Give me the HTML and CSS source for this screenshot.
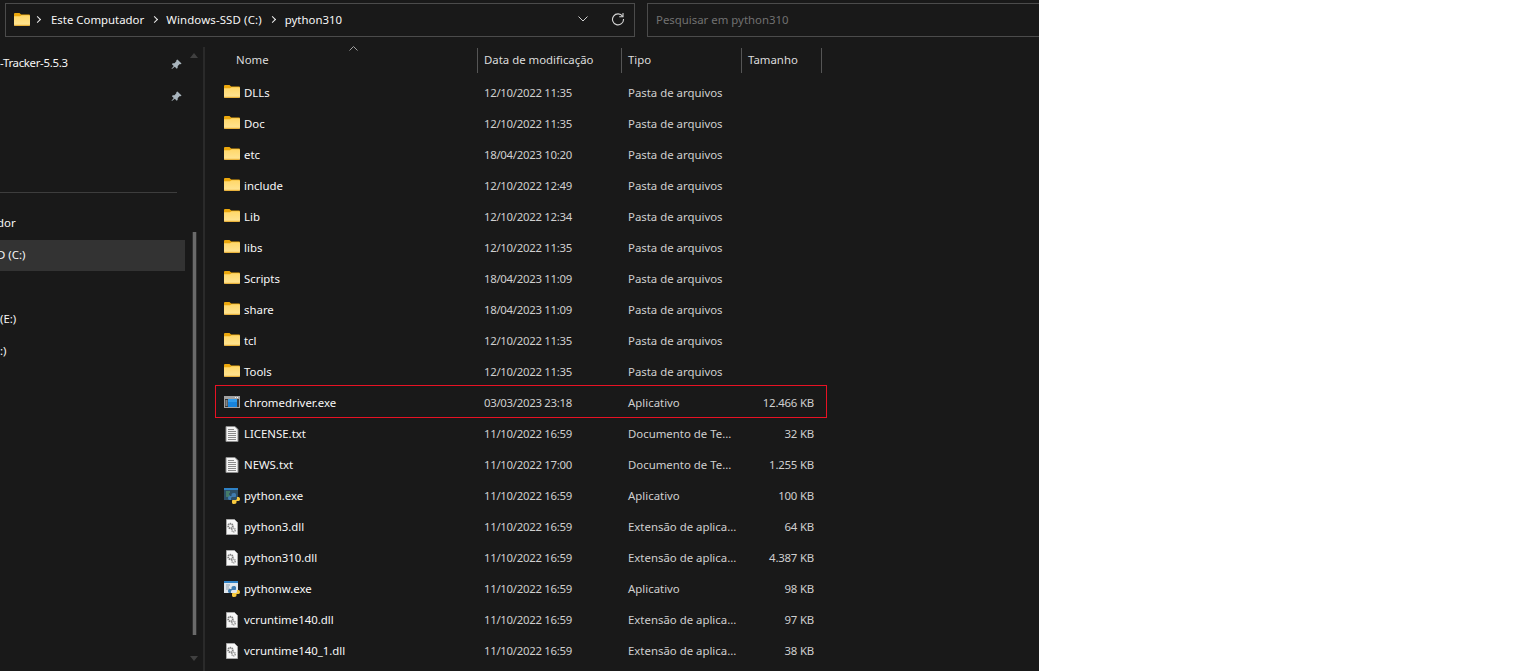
FILE: index.html
```html
<!DOCTYPE html>
<html lang="pt-BR">
<head>
    <meta charset="UTF-8">
    <title>python310</title>
    <link rel="stylesheet" href="styles.css">
</head>
<body>
    <svg class="defs" width="0" height="0">
        <defs>
            <linearGradient id="folderBody" x1="0" y1="0" x2="0" y2="1">
                <stop offset="0" stop-color="#ffd768"/>
                <stop offset="1" stop-color="#ffe596"/>
            </linearGradient>
        </defs>
        <symbol id="folder" viewBox="0 0 16 13">
            <path d="M0 1.200C0 .5.5 0 1.200 0h4.300l1.600 1.600h7.700c.7 0 1.200.5 1.200 1.200V4H0z" fill="#eba70c"/>
            <path d="M0 3.200h6l1.600-1h7.200c.7 0 1.200.5 1.200 1.200v8.400c0 .7-.5 1.200-1.200 1.200H1.200C.5 13 0 12.500 0 11.800z" fill="url(#folderBody)"/>
            <path d="M0 11.800h16c0 .7-.5 1.200-1.200 1.200H1.200C.5 13 0 12.500 0 11.800z" fill="#e9b23c"/>
        </symbol>
        <symbol id="app" viewBox="0 0 16 12">
            <rect width="16" height="12" fill="#a3a3a3"/>
            <rect x="11" y="1" width="1" height="1" fill="#f4f4f4"/>
            <rect x="13" y="1" width="1" height="1" fill="#f4f4f4"/>
            <rect x="1" y="3" width="14" height="8" fill="#3a3a3a"/>
            <path d="M1.500 5h2M1.500 7h2M1.500 9h2" stroke="#cfcfcf"/>
            <rect x="4" y="3" width="9" height="8" fill="#1783dc"/>
            <rect x="4" y="3" width="9" height="3" fill="#2f9bec"/>
        </symbol>
        <symbol id="text" viewBox="0 0 13 16">
            <path d="M.5.5h9l3 3v12H.5z" fill="#f4f4f4" stroke="#8f8f8f"/>
            <path d="M2.500 3.500h6M2.500 5.500h8M2.500 7.500h8M2.500 9.500h8M2.500 11.500h8M2.500 13.500h8" stroke="#8a8a8a"/>
        </symbol>
        <symbol id="dll" viewBox="0 0 12 16">
            <path d="M.5.5h8l3 3v12H.5z" fill="#f7f7f7" stroke="#a8a8a8"/>
            <circle cx="4.500" cy="7" r="2.300" fill="none" stroke="#808080" stroke-width="1.800" stroke-dasharray="1.300 .5"/>
            <circle cx="7.500" cy="11" r="1.700" fill="none" stroke="#969696" stroke-width="1.600" stroke-dasharray="1.100 .5"/>
        </symbol>
        <symbol id="python" viewBox="0 0 16 16">
            <rect width="14" height="12" fill="#2d4f66"/>
            <rect y="0" width="14" height="2" fill="#2f82c6"/>
            <path d="M2 4h4M2 6h3M2 8h4" stroke="#5ea86a"/>
            <path d="M10 5c-2 0-2.500.8-2.500 2v1H5.500C4.500 8 4 9 4 10s.5 2 1.500 2H7v-1.500c0-.8.700-1.500 1.500-1.500h2.500c.8 0 1-.5 1-1V6.500C12 5.500 11 5 10 5z" fill="#3f7cb0"/>
            <path d="M10 16c2 0 2.500-.8 2.500-2v-1h2c1 0 1.500-1 1.500-2s-.5-2-1.500-2H13v1.500c0 .8-.7 1.500-1.500 1.500H9c-.8 0-1 .5-1 1v1.500c0 1 1 1.500 2 1.500z" fill="#f7c93e"/>
        </symbol>
        <symbol id="pythonw" viewBox="0 0 16 16">
            <rect width="14" height="12" fill="#dfe6ec"/>
            <rect y="0" width="14" height="2" fill="#2f82c6"/>
            <path d="M2 4h4M2 6h3M2 8h4" stroke="#8fa3b3"/>
            <path d="M10 5c-2 0-2.500.8-2.500 2v1H5.500C4.500 8 4 9 4 10s.5 2 1.500 2H7v-1.500c0-.8.700-1.500 1.500-1.500h2.500c.8 0 1-.5 1-1V6.500C12 5.500 11 5 10 5z" fill="#3f7cb0"/>
            <path d="M10 16c2 0 2.500-.8 2.500-2v-1h2c1 0 1.500-1 1.500-2s-.5-2-1.500-2H13v1.500c0 .8-.7 1.500-1.500 1.500H9c-.8 0-1 .5-1 1v1.500c0 1 1 1.500 2 1.500z" fill="#f7c93e"/>
        </symbol>
        <symbol id="pin" viewBox="0 0 12 12">
            <path d="M7 .5l4.500 4.500-1 .8-.9-.3L7.400 7.700l-.2 2-1 .8-2-2L1 11l-.5-.5L3 7.700l-2-2 .8-1 2-.2 2.200-2.200-.3-.9z" fill="#a9b5bd"/>
        </symbol>
    </svg>

    <div class="explorer">
        <div class="toolbar">
            <div class="address">
                <svg class="crumb-folder"><use href="#folder"/></svg>
                <span class="crumb-sep crumb-sep-first"></span>
                <span class="crumb">Este Computador</span>
                <span class="crumb-sep"></span>
                <span class="crumb crumb-wide">Windows-SSD (C:)</span>
                <span class="crumb-sep crumb-sep-last"></span>
                <span class="crumb">python310</span>
                <svg class="addr-down" viewBox="0 0 10 6"><path d="M.5.5L5 5 9.500.5" fill="none" stroke="#cfcfcf"/></svg>
                <svg class="addr-refresh" viewBox="0 0 14 14"><path d="M11.600 4.300A5.500 5.500 0 1 0 12.500 7" fill="none" stroke="#d6d6d6" stroke-width="1.100"/><path d="M12 1v3.800H8.200" fill="none" stroke="#d6d6d6" stroke-width="1.100"/></svg>
            </div>
            <div class="search">Pesquisar em python310</div>
        </div>

        <div class="main">
            <aside class="sidebar">
                <nav class="nav">
                    <div class="nav-item"><span class="nav-tight">-Tracker-5.5.3</span><svg class="pin"><use href="#pin"/></svg></div>
                    <div class="nav-item"><svg class="pin"><use href="#pin"/></svg></div>
                    <div class="nav-item"></div>
                    <div class="nav-item"></div>
                    <div class="nav-sep"><hr></div>
                    <div class="nav-item"><span class="nav-cut">dor</span></div>
                    <div class="nav-item nav-active"><span class="nav-cut">D (C:)</span></div>
                    <div class="nav-item"></div>
                    <div class="nav-item">(E:)</div>
                    <div class="nav-item">:)</div>
                </nav>
                <div class="scrollbar">
                    <span class="arrow-up"></span>
                    <span class="thumb"></span>
                    <span class="arrow-down"></span>
                </div>
            </aside>

            <section class="files">
                <div class="head">
                    <div class="head-cell head-name">Nome<svg class="sort" viewBox="0 0 9 5"><path d="M.5 4.500L4.500.5l4 4" fill="none" stroke="#a0a0a0"/></svg></div>
                    <div class="head-cell">Data de modificação</div>
                    <div class="head-cell">Tipo</div>
                    <div class="head-cell">Tamanho</div>
                </div>

                <div class="row"><div class="name"><svg class="ico"><use href="#folder"/></svg>DLLs</div><div class="cell">12/10/2022 11:35</div><div class="cell">Pasta de arquivos</div><div class="size"></div></div>
                <div class="row"><div class="name"><svg class="ico"><use href="#folder"/></svg>Doc</div><div class="cell">12/10/2022 11:35</div><div class="cell">Pasta de arquivos</div><div class="size"></div></div>
                <div class="row"><div class="name"><svg class="ico"><use href="#folder"/></svg>etc</div><div class="cell">18/04/2023 10:20</div><div class="cell">Pasta de arquivos</div><div class="size"></div></div>
                <div class="row"><div class="name"><svg class="ico"><use href="#folder"/></svg>include</div><div class="cell">12/10/2022 12:49</div><div class="cell">Pasta de arquivos</div><div class="size"></div></div>
                <div class="row"><div class="name"><svg class="ico"><use href="#folder"/></svg>Lib</div><div class="cell">12/10/2022 12:34</div><div class="cell">Pasta de arquivos</div><div class="size"></div></div>
                <div class="row"><div class="name"><svg class="ico"><use href="#folder"/></svg>libs</div><div class="cell">12/10/2022 11:35</div><div class="cell">Pasta de arquivos</div><div class="size"></div></div>
                <div class="row"><div class="name"><svg class="ico"><use href="#folder"/></svg>Scripts</div><div class="cell">18/04/2023 11:09</div><div class="cell">Pasta de arquivos</div><div class="size"></div></div>
                <div class="row"><div class="name"><svg class="ico"><use href="#folder"/></svg>share</div><div class="cell">18/04/2023 11:09</div><div class="cell">Pasta de arquivos</div><div class="size"></div></div>
                <div class="row"><div class="name"><svg class="ico"><use href="#folder"/></svg>tcl</div><div class="cell">12/10/2022 11:35</div><div class="cell">Pasta de arquivos</div><div class="size"></div></div>
                <div class="row"><div class="name"><svg class="ico"><use href="#folder"/></svg>Tools</div><div class="cell">12/10/2022 11:35</div><div class="cell">Pasta de arquivos</div><div class="size"></div></div>
                <div class="row row-marked"><div class="name"><svg class="ico ico-app"><use href="#app"/></svg>chromedriver.exe</div><div class="cell">03/03/2023 23:18</div><div class="cell">Aplicativo</div><div class="size">12.466 KB</div></div>
                <div class="row"><div class="name"><svg class="ico ico-doc"><use href="#text"/></svg>LICENSE.txt</div><div class="cell">11/10/2022 16:59</div><div class="cell">Documento de Te...</div><div class="size">32 KB</div></div>
                <div class="row"><div class="name"><svg class="ico ico-doc"><use href="#text"/></svg>NEWS.txt</div><div class="cell">11/10/2022 17:00</div><div class="cell">Documento de Te...</div><div class="size">1.255 KB</div></div>
                <div class="row"><div class="name"><svg class="ico ico-doc"><use href="#python"/></svg>python.exe</div><div class="cell">11/10/2022 16:59</div><div class="cell">Aplicativo</div><div class="size">100 KB</div></div>
                <div class="row"><div class="name"><svg class="ico ico-doc"><use href="#dll"/></svg>python3.dll</div><div class="cell">11/10/2022 16:59</div><div class="cell">Extensão de aplica...</div><div class="size">64 KB</div></div>
                <div class="row"><div class="name"><svg class="ico ico-doc"><use href="#dll"/></svg>python310.dll</div><div class="cell">11/10/2022 16:59</div><div class="cell">Extensão de aplica...</div><div class="size">4.387 KB</div></div>
                <div class="row"><div class="name"><svg class="ico ico-doc"><use href="#pythonw"/></svg>pythonw.exe</div><div class="cell">11/10/2022 16:59</div><div class="cell">Aplicativo</div><div class="size">98 KB</div></div>
                <div class="row"><div class="name"><svg class="ico ico-doc"><use href="#dll"/></svg>vcruntime140.dll</div><div class="cell">11/10/2022 16:59</div><div class="cell">Extensão de aplica...</div><div class="size">97 KB</div></div>
                <div class="row"><div class="name"><svg class="ico ico-doc"><use href="#dll"/></svg>vcruntime140_1.dll</div><div class="cell">11/10/2022 16:59</div><div class="cell">Extensão de aplica...</div><div class="size">38 KB</div></div>
            </section>
        </div>
    </div>
</body>
</html>
```

FILE: styles.css
```css
html, body {
    margin: 0;
    background: #fff;
}
.defs {
    position: absolute;
}
.explorer {
    width: 1039px;
    height: 671px;
    overflow: hidden;
    background: #191919;
    color: #f7f7f7;
    font: 11.4px "Noto Sans", "Liberation Sans", sans-serif;
}

/* barra de endereco e pesquisa */
.toolbar {
    display: flex;
    height: 47px;
    padding: 3px 0 0 5px;
    box-sizing: border-box;
}
.address, .search {
    height: 34px;
    box-sizing: border-box;
    border: 1px solid #4b4b4b;
    padding-bottom: 2px;
    display: flex;
    align-items: center;
}
.address {
    width: 630px;
    padding-left: 8px;
}
.crumb-folder {
    width: 16px;
    height: 13px;
    flex: none;
}
.crumb-wide {
    letter-spacing: .15px;
}
.crumb-sep {
    width: 4px;
    height: 4px;
    margin: 0 9px 0 8px;
    border-top: 1.5px solid #f0f0f0;
    border-right: 1.5px solid #f0f0f0;
    transform: rotate(45deg);
}
.crumb-sep-first {
    margin: 0 11px 0 5px;
}
.crumb-sep-last {
    margin: 0 10px 0 8px;
}
.addr-down {
    width: 10px;
    height: 6px;
    margin-left: auto;
}
.addr-refresh {
    width: 14px;
    height: 14px;
    margin: 0 9px 0 23px;
}
.search {
    flex: 1;
    margin-left: 12px;
    padding-left: 8px;
    border-right: 0;
    color: #717171;
}

.main {
    display: flex;
    height: 624px;
}

/* painel esquerdo */
.sidebar {
    display: flex;
    width: 205px;
    flex: none;
    box-sizing: border-box;
    border-right: 2px solid #2a2a2a;
}
.nav {
    width: 185px;
}
.nav-item {
    display: flex;
    align-items: center;
    height: 32px;
    padding-bottom: 2px;
    box-sizing: border-box;
    overflow: hidden;
}
.nav-cut {
    margin-left: -3px;
}
.nav-tight {
    letter-spacing: -.3px;
}
.nav-active {
    border-top: 1px solid #191919;
    background: #333;
}
.nav-sep {
    display: flex;
    align-items: center;
    height: 32px;
    padding-top: 2px;
    box-sizing: border-box;
}
.nav-sep hr {
    width: 177px;
    margin: 0;
    border: 0;
    border-top: 1px solid #3d3d3d;
}
.pin {
    width: 11px;
    height: 11px;
    margin: 4px 3px 0 auto;
}
.scrollbar {
    display: flex;
    flex-direction: column;
    align-items: center;
    width: 18px;
}
.arrow-up {
    margin-top: 6px;
    border: 4px solid transparent;
    border-top: 0;
    border-bottom: 5px solid #404040;
}
.thumb {
    width: 3px;
    height: 403px;
    margin-top: 174px;
    background: #6a6a6a;
    border-left: 1px solid #2f2f2f;
    border-right: 1px solid #2f2f2f;
}
.arrow-down {
    margin-top: 21px;
    border: 4px solid transparent;
    border-bottom: 0;
    border-top: 5px solid #404040;
}

/* lista de arquivos */
.files {
    flex: 1;
    padding: 1px 0 0 10px;
}
.head, .row {
    display: grid;
    grid-template-columns: 263px 144px 120px 80px;
}
.head {
    height: 25px;
    margin-bottom: 4px;
}
.head-cell {
    display: flex;
    align-items: center;
    padding: 0 0 2px 6px;
    border-right: 1px solid #555;
    color: #dcdcdc;
}
.head-name {
    position: relative;
    padding-left: 21px;
}
.sort {
    position: absolute;
    left: 134px;
    top: -2px;
    width: 9px;
    height: 5px;
}
.row {
    position: relative;
    height: 31px;
    align-items: center;
}
.name {
    display: flex;
    align-items: center;
    padding-left: 9px;
}
.ico {
    width: 16px;
    height: 13px;
    margin: 0 4px 2px 0;
    flex: none;
}
.ico-app {
    height: 12px;
    margin-bottom: 1px;
}
.ico-doc {
    height: 16px;
    margin-bottom: 0;
}
.cell {
    padding-left: 6px;
    color: #cfcfcf;
    white-space: nowrap;
    overflow: hidden;
}
.cell:nth-child(2) {
    letter-spacing: -.3px;
}
.size {
    padding-right: 8px;
    text-align: right;
    letter-spacing: -.2px;
    color: #cfcfcf;
}
.row-marked::after {
    content: "";
    position: absolute;
    left: 0;
    top: -2px;
    width: 612px;
    height: 33px;
    box-sizing: border-box;
    border: 1px solid #e81224;
}
```
